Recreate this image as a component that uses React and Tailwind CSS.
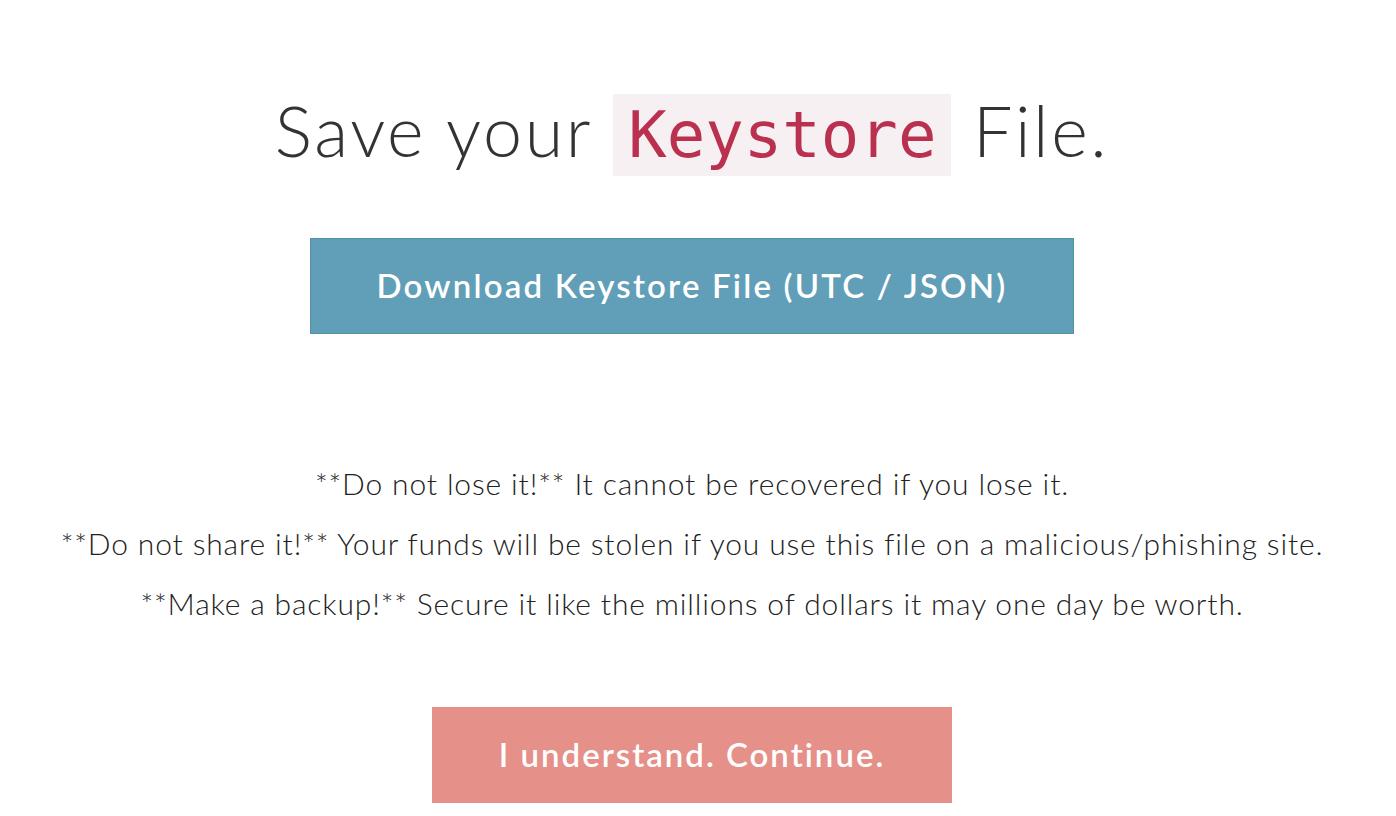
export default function App() {
  return (
    <div className="min-h-screen bg-white text-[#333] text-center pr-3" style={{ fontFamily: 'Lato, "Open Sans", sans-serif' }}>
      <h1 className="pt-[82px] text-[70px] font-light leading-[96px] tracking-[2.6px]">
        Save your{' '}
        <code className="bg-[#f7f0f3] px-[15px] py-[4px] text-[#b9314f] text-[64px] font-normal tracking-normal" style={{ fontFamily: '"DejaVu Sans Mono", monospace' }}>
          Keystore
        </code>{' '}
        File.
      </h1>

      <div className="mt-[55px] flex justify-center">
        <button className="w-[764px] h-[96px] bg-[#619eb8] border border-[#5590a9] text-white text-[33px] font-semibold tracking-[2.2px]">
          Download Keystore File (UTC / JSON)
        </button>
      </div>

      <div className="mt-[119px] text-[30px] text-[#222] font-light leading-[60px] tracking-[0.85px]">
        <p>**Do not lose it!** It cannot be recovered if you lose it.</p>
        <p>**Do not share it!** Your funds will be stolen if you use this file on a malicious/phishing site.</p>
        <p>**Make a backup!** Secure it like the millions of dollars it may one day be worth.</p>
      </div>

      <div className="mt-[74px] flex justify-center">
        <button className="w-[520px] h-[96px] bg-[#e59088] text-white text-[33px] font-semibold tracking-[2px]">
          I understand. Continue.
        </button>
      </div>
    </div>
  );
}
